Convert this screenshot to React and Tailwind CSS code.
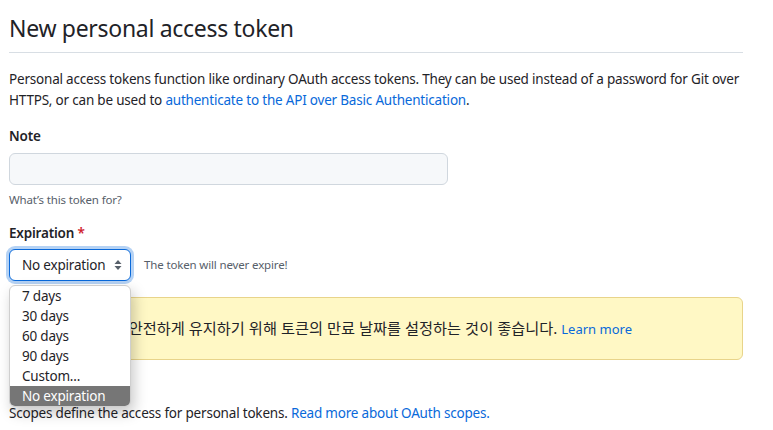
import React from "react";

export default function App() {
  return (
    <div
      className="w-[773px] h-[430px] overflow-hidden bg-white text-[#1f2328]"
      style={{ fontFamily: '"Noto Sans", "Noto Sans CJK KR", sans-serif' }}
    >
      <div className="ml-[9px] w-[734px]">
        <div className="pt-3 pb-2 border-b border-[#d8dee4]">
          <h1 className="text-[23px] leading-8 font-normal tracking-[-0.3px]">New personal access token</h1>
        </div>

        <p className="mt-4 text-[13.5px] leading-[21px] tracking-[-0.2px]">
          Personal access tokens function like ordinary OAuth access tokens. They can be used instead of a password for Git over HTTPS, or can be used to{" "}
          <a className="text-[#0969da]">authenticate to the API over Basic Authentication</a>.
        </p>

        <div className="mt-[15px]">
          <label className="block text-[13.5px] leading-[21px] font-semibold tracking-[-0.2px]">Note</label>
          <div className="mt-1.5 w-[439px] h-8 rounded-md border border-[#d0d7de] bg-[#f6f8fa]" />
          <p className="mt-1.5 text-[11.5px] leading-[18px] text-[#57606a] tracking-[-0.15px]">What’s this token for?</p>
        </div>

        <div className="mt-[14px]">
          <label className="block text-[13.5px] leading-[21px] font-semibold tracking-[-0.2px]">
            Expiration <span className="text-[#cf222e]">*</span>
          </label>
          <div className="mt-[5px] flex items-center gap-[13px]">
            <div className="relative">
              <div className="w-[122px] h-8 rounded-md border border-[#0969da] ring-[3px] ring-[#0969da]/30 bg-white flex items-center pl-3 pr-2 text-[13.5px] tracking-[-0.2px]">
                <span className="flex-1">No expiration</span>
                <svg width="8" height="12" viewBox="0 0 8 12" className="text-[#57606a]">
                  <path d="M4 1 L7.5 5 H0.5 Z" fill="currentColor" />
                  <path d="M4 11 L7.5 7 H0.5 Z" fill="currentColor" />
                </svg>
              </div>
              <div className="absolute left-0 top-[36px] z-10 w-[122px] rounded-md border border-[#cfcfcf] bg-white overflow-hidden shadow-[3px_6px_14px_rgba(0,0,0,0.22)] text-[13.5px] leading-5 tracking-[-0.2px] text-[#1f2328]">
                {["7 days", "30 days", "60 days", "90 days", "Custom..."].map((t) => (
                  <div key={t} className="pl-3">{t}</div>
                ))}
                <div className="pl-3 bg-[#767676] text-white">No expiration</div>
              </div>
            </div>
            <span className="text-[11.5px] text-[#57606a] tracking-[-0.15px]">The token will never expire!</span>
          </div>
        </div>

        <div className="mt-4 h-[63px] rounded-md border border-[#e8d48a] bg-[#fff8c5] flex items-center pl-1 pr-4 text-[15.25px]">
          <span>
            GitHub는 정보를 안전하게 유지하기 위해 토큰의 만료 날짜를 설정하는 것이 좋습니다.{" "}
            <a className="text-[#0969da] text-[13px]">Learn more</a>
          </span>
        </div>

        <h3 className="mt-3 text-[13.5px] leading-[21px] font-semibold tracking-[-0.2px]">Select scopes</h3>
        <p className="mt-[10px] text-[13.5px] leading-[21px] tracking-[-0.2px]">
          Scopes define the access for personal tokens.{" "}
          <a className="text-[#0969da]">Read more about OAuth scopes.</a>
        </p>
      </div>
    </div>
  );
}
